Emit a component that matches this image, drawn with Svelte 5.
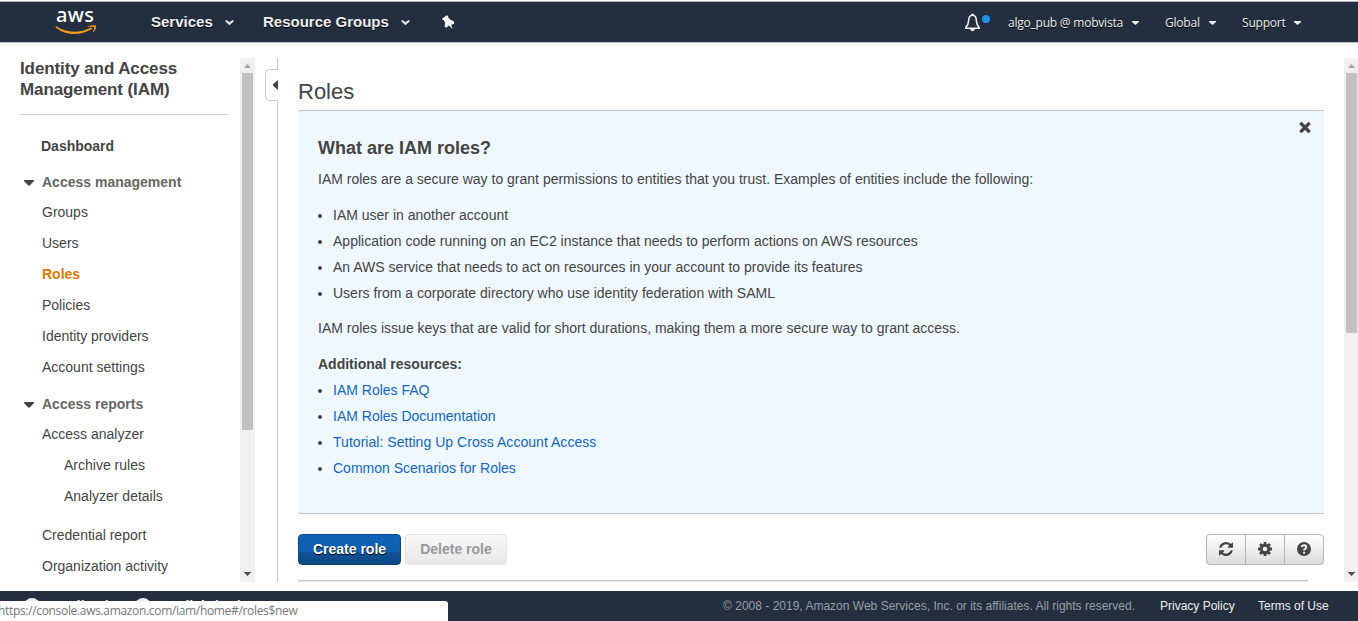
<script>
  const management = ['Groups', 'Users', 'Roles', 'Policies', 'Identity providers', 'Account settings'];
  const reports = [
    { label: 'Access analyzer' },
    { label: 'Archive rules', sub: true },
    { label: 'Analyzer details', sub: true },
    { label: 'Credential report', gap: true },
    { label: 'Organization activity' }
  ];
  const examples = [
    'IAM user in another account',
    'Application code running on an EC2 instance that needs to perform actions on AWS resources',
    'An AWS service that needs to act on resources in your account to provide its features',
    'Users from a corporate directory who use identity federation with SAML'
  ];
  const resources = [
    'IAM Roles FAQ',
    'IAM Roles Documentation',
    'Tutorial: Setting Up Cross Account Access',
    'Common Scenarios for Roles'
  ];
</script>

{#snippet chevron()}
  <svg class="chevron" width="9" height="6" viewBox="0 0 9 6"><path d="M0 1L1.4 0L4.5 2.2L7.6 0L9 1L4.5 5.2Z" fill="#eee" /></svg>
{/snippet}
{#snippet caret()}
  <svg class="caret" width="7" height="4" viewBox="0 0 7 4"><path d="M0 0H7V1L3.5 4L0 1Z" fill="#eee" /></svg>
{/snippet}
{#snippet scrollbar(kind)}
  <div class="scrollbar {kind}">
    <svg width="15" height="15" viewBox="0 0 15 15"><path d="M4 10L7.5 6L11 10Z" fill="#a3a3a3" /></svg>
    <div class="thumb"></div>
    <svg width="15" height="15" viewBox="0 0 15 15"><path d="M3.5 5H11.5L7.5 9Z" fill="#505050" /></svg>
  </div>
{/snippet}

<div class="page">
  <header>
    <div class="logo">
      <span>aws</span>
      <svg width="42" height="12" viewBox="0 0 42 12">
        <path d="M1 1C10 7.6 24 9 36 2.6L37.4 3.8C25 11.6 9 10.5 0.4 2Z" fill="#f7981f" />
        <path d="M32.5 1.4C36 -.1 40.5-.1 41 .8C41.6 2 40.2 5.5 38.4 7.4L37.8 7C39 4.5 39.5 2.7 39.1 2.2C38.7 1.6 35 1.6 32.6 1.9Z" fill="#f7981f" />
      </svg>
    </div>
    <span class="menu services">Services</span>{@render chevron()}
    <span class="menu groups">Resource Groups</span>{@render chevron()}
    <svg class="pin" width="13" height="15" viewBox="0 0 13 15">
      <path d="M0.2 3.8L4.3 0.4L6.2 0.7L6.2 2.4L8.8 5L11.9 6.3L12.1 8.7L9.2 9.7L10.5 14L7 10.6L4.5 12.6L2.6 12L3.1 7.9L1.8 5L0.5 5Z" fill="#f5f5f5" />
    </svg>
    <div class="account">
      <svg class="bell" width="26" height="20" viewBox="0 0 26 20">
        <path d="M8.5 2C5.7 2.5 4.8 4.5 4.7 7C4.6 10.5 3.8 12.5 1.8 14.6V15.2H15.2V14.6C13.2 12.5 12.4 10.5 12.3 7C12.2 4.5 11.3 2.5 8.5 2Z" fill="none" stroke="#f2f2f2" stroke-width="1.5" />
        <path d="M7.5 2V1H9.5V2M6.2 15.5C6.5 18.7 10.5 18.7 10.8 15.5Z" fill="#f2f2f2" stroke="#f2f2f2" stroke-width=".5" />
        <circle cx="22" cy="6" r="4" fill="#218feb" />
      </svg>
      <span class="user">algo_pub @ mobvista</span>{@render caret()}
      <span class="global">Global</span>{@render caret()}
      <span class="support">Support</span>{@render caret()}
    </div>
  </header>

  <div class="body">
    <nav>
      <h2>Identity and Access Management (IAM)</h2>
      <div class="dashboard">Dashboard</div>
      <div class="section"><svg width="10" height="6" viewBox="0 0 10 6"><path d="M0 0H10V1L5.8 5.5H4.2L0 1Z" fill="#444" /></svg>Access management</div>
      {#each management as item}
        <div class="item" class:active={item === 'Roles'}>{item}</div>
      {/each}
      <div class="section second"><svg width="10" height="6" viewBox="0 0 10 6"><path d="M0 0H10V1L5.8 5.5H4.2L0 1Z" fill="#444" /></svg>Access reports</div>
      {#each reports as item}
        <div class="item" class:sub={item.sub} class:gap={item.gap}>{item.label}</div>
      {/each}
    </nav>
    {@render scrollbar('left')}
    <div class="divider">
      <div class="stub"></div>
      <div class="handle"><svg width="5" height="10" viewBox="0 0 5 10"><path d="M5 0V10L0 5.7V4.3Z" fill="#444" /></svg></div>
      <div class="stub rest"></div>
    </div>

    <main>
      <h1>Roles</h1>
      <section class="info">
        <svg class="close" width="12" height="12" viewBox="0 0 12 12"><path d="M2.5 3L9.5 10M9.5 3L2.5 10" stroke="#444" stroke-width="3.3" stroke-linecap="square" /></svg>
        <h3>What are IAM roles?</h3>
        <p>IAM roles are a secure way to grant permissions to entities that you trust. Examples of entities include the following:</p>
        <ul class="examples">
          {#each examples as text}<li>{text}</li>{/each}
        </ul>
        <p>IAM roles issue keys that are valid for short durations, making them a more secure way to grant access.</p>
        <h4>Additional resources:</h4>
        <ul>
          {#each resources as text}<li><span class="link">{text}</span></li>{/each}
        </ul>
      </section>
      <div class="toolbar">
        <button class="create">Create role</button>
        <button class="delete">Delete role</button>
        <div class="tools">
          <div><svg width="14" height="14" viewBox="0 0 1536 1536"><path fill="#444" d="M1511 928q0 5-1 7-64 268-268 434.500T764 1536q-146 0-282.500-55T238 1324l-129 129q-19 19-45 19t-45-19-19-45V960q0-26 19-45t45-19h448q26 0 45 19t19 45-19 45l-137 137q71 66 161 102t187 36q134 0 250-65t186-179q11-17 53-117 8-23 30-23h192q13 0 22.500 9.500t9.500 22.500zM1536 128v448q0 26-19 45t-45 19h-448q-26 0-45-19t-19-45 19-45l138-138Q969 256 768 256q-134 0-250 65T332 500q-11 17-53 117-8 23-30 23H50q-13 0-22.500-9.500T18 608v-7q65-268 270-434.500T768 0q146 0 284 55.500T1297 212l130-129q19-19 45-19t45 19 19 45z" /></svg></div>
          <div><svg width="14" height="14" viewBox="0 0 14 14"><path d="M7 0V14M0 7H14M2.1 2.1L11.9 11.9M11.9 2.1L2.1 11.9" stroke="#444" stroke-width="2.8" /><circle cx="7" cy="7" r="5.2" fill="#444" /><circle cx="7" cy="7" r="2.3" fill="#ececec" /></svg></div>
          <div><svg width="14" height="14" viewBox="0 0 14 14"><circle cx="7" cy="7" r="7" fill="#444" /><path d="M4.7 5.2C5 2.7 9.3 2.8 9.3 5.2C9.3 6.8 7.1 6.6 7.1 8.5M7.1 9.8V11.8" fill="none" stroke="#eee" stroke-width="2" /></svg></div>
        </div>
      </div>
      <div class="table-edge"></div>
    </main>
    {@render scrollbar('right')}
  </div>

  <footer>
    <div class="footer-left">
      <i></i><span class="feedback">Feedback</span>
      <i class="globe"></i><span>English (US)</span>
    </div>
    <span class="copyright">© 2008 - 2019, Amazon Web Services, Inc. or its affiliates. All rights reserved.</span>
    <span class="privacy">Privacy Policy</span>
    <span class="terms">Terms of Use</span>
    <div class="status">https://console.aws.amazon.com/iam/home#/roles$new</div>
  </footer>
</div>

<style>
  :global(body) { overflow: hidden; background: #fff; }
  .page { width: 1358px; height: 621px; overflow: hidden; display: flex; flex-direction: column; box-sizing: border-box; padding-top: 1px; font-family: 'Liberation Sans', Arial, sans-serif; font-size: 14px; color: #444; }
  .page * { box-sizing: border-box; }
  svg { display: block; flex: none; }
  header { height: 42px; flex: none; background: #232f3e; border-top: 1px solid #aeb6bb; border-bottom: 1px solid #bfc3c7; display: flex; align-items: center; color: #eee; white-space: nowrap; }
  .logo { width: 42px; height: 33px; margin-left: 55px; color: #fff; font: 500 20px/20px 'Noto Sans', sans-serif; display: flex; flex-direction: column; }
  .logo span { height: 19px; line-height: 18px; margin-left: 1px; letter-spacing: .3px; }
  .menu { font-size: 15px; font-weight: bold; line-height: 20px; text-shadow: 0 1px 0 #000; }
  .services { margin-left: 54px; width: 74px; }
  .groups { margin-left: 29px; width: 138px; }
  .chevron { margin-top: 2px; }
  .pin { margin-left: 32px; }
  .account { display: flex; align-items: center; margin-left: auto; width: 394px; font: 12px/20px 'Open Sans', 'Noto Sans', sans-serif; text-shadow: 0 1px 0 #000; }
  .account span { padding-top: 1px; white-space: nowrap; }
  .caret { margin-top: 2px; }
  .bell { width: 26px; margin-top: 1px; }
  .user { margin-left: 18px; width: 124px; letter-spacing: -.22px; }
  .global { margin-left: 26px; width: 44px; letter-spacing: -.2px; }
  .support { margin-left: 26px; width: 52px; letter-spacing: -.2px; }
  .body { display: flex; flex: none; height: 524px; margin-top: 15px; }
  nav { width: 240px; flex: none; height: 524px; padding-left: 20px; overflow: hidden; }
  h2 { width: 208px; height: 57px; margin: 0; font-size: 17px; line-height: 21px; letter-spacing: -.1px; border-bottom: 1px solid #ccc; }
  .dashboard { margin: 21px 0 0 21px; font-weight: bold; line-height: 20px; }
  .section { display: flex; align-items: center; height: 20px; margin-top: 16px; padding-left: 4px; gap: 8px; font-weight: bold; color: #666; }
  .section svg { margin-top: 2px; }
  .section + .item { margin-top: 5px; }
  .section.second { margin-top: 11px; }
  .item { height: 31px; line-height: 20px; padding-left: 22px; padding-top: 5px; }
  .item.sub { padding-left: 44px; }
  .item.gap { margin-top: 8px; }
  .active { color: #e07700; font-weight: bold; }
  .scrollbar { width: 15px; height: 524px; flex: none; background: #f0f0f0; display: flex; flex-direction: column; }
  .thumb { width: 11px; margin-left: 2px; background: #c1c1c1; margin-bottom: auto; }
  .left .thumb { height: 357px; }
  .right .thumb { height: 260px; }
  .right { margin-left: 20px; }
  .divider { width: 13px; margin-left: 10px; flex: none; }
  .stub { height: 11px; border-right: 1px solid #c8c8c8; }
  .handle { height: 32px; border: 1px solid #c8c8c8; border-right: 0; border-radius: 5px 0 0 5px; display: flex; align-items: center; justify-content: flex-end; }
  .stub.rest { height: 481px; }
  main { margin-left: 20px; width: 1026px; flex: none; }
  h1 { height: 52px; margin: 0; padding-top: 21px; font-size: 22px; line-height: 26px; font-weight: normal; }
  .info { position: relative; height: 404px; background: #f0f8ff; border-top: 1px solid #c0c4c8; border-bottom: 1px solid #c0c4c8; padding: 25px 20px 0; }
  .close { position: absolute; right: 13px; top: 10px; }
  h3 { margin: 0; font-size: 18px; line-height: 24px; }
  p { margin: 9px 0 0; line-height: 20px; }
  ul { list-style: none; margin: 0; padding: 0; }
  ul.examples { margin: 13px 0 12px; }
  .examples li:nth-child(2), .examples li:nth-child(3) { letter-spacing: .01px; }
  li { line-height: 26px; padding-left: 15px; display: flex; }
  li::before { content: ''; width: 4px; height: 4px; border-radius: 2px; background: #444; margin: 12px 11px 0 -15px; }
  li:nth-child(3) .link { letter-spacing: .04px; }
  h4 { margin: 16px 0 3px; font-size: 14px; line-height: 20px; }
  .link { color: #1166bb; }
  .toolbar { display: flex; margin-top: 20px; height: 31px; }
  button { font: bold 14px/20px 'Liberation Sans', Arial, sans-serif; height: 31px; border-radius: 4px; padding: 0 0 2px; }
  .create { width: 103px; color: #fff; border: 1px solid #0d467e; background: linear-gradient(#0e63b8, #115fad 57%, #10519a 58%, #0c4a86); text-shadow: 0 1px 1px #000; }
  .delete { width: 102px; margin-left: 4px; color: #999; border: 1px solid #e4e4e4; background: linear-gradient(#f8f8f8, #e8e8e8); }
  .tools { display: flex; margin-left: auto; width: 118px; border: 1px solid #b5b5b5; border-radius: 4px; background: linear-gradient(#fff, #dcdcdc); }
  .tools div { flex: 1; display: flex; align-items: center; justify-content: center; padding-bottom: 2px; }
  .tools div + div { border-left: 1px solid #b5b5b5; }
  .table-edge { width: 1010px; height: 2px; margin-top: 15px; border: 1px solid #c8c8c8; border-bottom-color: #e6e6e6; }
  footer { position: relative; height: 30px; flex: none; margin-top: 9px; background: #232f3e; color: #eee; display: flex; align-items: center; font-size: 12px; white-space: nowrap; }
  .footer-left { width: 723px; display: flex; align-items: center; font-weight: bold; font-size: 14px; padding-left: 24px; }
  .footer-left i { width: 16px; height: 16px; border-radius: 8px; background: #eee; margin-right: 8px; }
  .feedback { width: 87px; }
  .copyright { width: 437px; color: #999fa7; letter-spacing: .01px; }
  .privacy { width: 98px; }
  .status { position: absolute; left: 0; bottom: 0; width: 448px; height: 20px; background: #fff; color: #777; border-top-right-radius: 3px; font: 12px/19px 'Open Sans', 'Noto Sans', sans-serif; letter-spacing: -.33px; text-indent: -2px; }
</style>
